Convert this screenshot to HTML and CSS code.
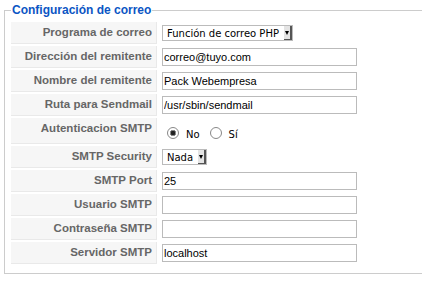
FILE: index.html
```html
<!DOCTYPE html>
<html lang="es">
<head>
    <meta charset="UTF-8">
    <title>Configuración de correo</title>
    <link rel="stylesheet" href="styles.css">
</head>
<body>
    <fieldset class="adminform">
        <legend>Configuración de correo</legend>
        <div class="admintable">
            <div class="row">
                <label class="key">Programa de correo</label>
                <div class="field">
                    <span class="select select-wide">
                        <span class="select-text">Función de correo PHP</span>
                        <span class="select-arrow"></span>
                    </span>
                </div>
            </div>
            <div class="row">
                <label class="key">Dirección del remitente</label>
                <div class="field"><input class="inputbox" type="text" value="correo@tuyo.com"></div>
            </div>
            <div class="row">
                <label class="key">Nombre del remitente</label>
                <div class="field"><input class="inputbox" type="text" value="Pack Webempresa"></div>
            </div>
            <div class="row">
                <label class="key">Ruta para Sendmail</label>
                <div class="field"><input class="inputbox" type="text" value="/usr/sbin/sendmail"></div>
            </div>
            <div class="row row-tall">
                <label class="key">Autenticacion SMTP</label>
                <div class="field radios">
                    <label class="radio"><input type="radio" name="smtpauth" checked> <span>No</span></label>
                    <label class="radio"><input type="radio" name="smtpauth"> <span>Sí</span></label>
                </div>
            </div>
            <div class="row">
                <label class="key">SMTP Security</label>
                <div class="field">
                    <span class="select select-small">
                        <span class="select-text">Nada</span>
                        <span class="select-arrow"></span>
                    </span>
                </div>
            </div>
            <div class="row">
                <label class="key">SMTP Port</label>
                <div class="field"><input class="inputbox" type="text" value="25"></div>
            </div>
            <div class="row">
                <label class="key">Usuario SMTP</label>
                <div class="field"><input class="inputbox" type="text" value=""></div>
            </div>
            <div class="row">
                <label class="key">Contraseña SMTP</label>
                <div class="field"><input class="inputbox" type="password" value=""></div>
            </div>
            <div class="row">
                <label class="key">Servidor SMTP</label>
                <div class="field"><input class="inputbox" type="text" value="localhost"></div>
            </div>
        </div>
    </fieldset>
</body>
</html>
```
FILE: styles.css
```css
body {
    margin: 0;
    background-color: #fff;
    font-family: "Liberation Sans", Arial, sans-serif;
    font-size: 11px;
    color: #333;
}
fieldset.adminform {
    width: 440px;
    margin: 3px 0 0 4px;
    padding: 5px 0 9px 6px;
    border: 1px solid #ccc;
}
fieldset.adminform legend {
    margin-left: 0;
    padding: 0 1px;
    color: #0b55c4;
    font-size: 12px;
    font-weight: bold;
    line-height: 14px;
}
.admintable {
    display: flex;
    flex-direction: column;
    gap: 2px;
}
.row {
    display: grid;
    grid-template-columns: 146px 1fr;
    column-gap: 5px;
    height: 22px;
}
.row-tall {
    height: 26px;
}
.key {
    box-sizing: border-box;
    padding: 3px 4px 0 0;
    background-color: #f6f6f6;
    border-bottom: 1px solid #e9e9e9;
    border-right: 1px solid #e9e9e9;
    text-align: right;
    color: #666;
    font-size: 11.5px;
    font-weight: bold;
    line-height: 14px;
}
.field {
    display: flex;
    align-items: center;
}
.inputbox {
    box-sizing: border-box;
    width: 195px;
    height: 18px;
    margin: 0;
    padding: 0 1px;
    border: 1px solid #bbb;
    font-family: "Liberation Sans", Arial, sans-serif;
    font-size: 11px;
    color: #000;
}
.select {
    box-sizing: border-box;
    display: inline-flex;
    align-items: center;
    height: 16px;
    border: 1px solid #bbb;
    background-color: #fff;
}
.select-wide {
    width: 131px;
}
.select-small {
    width: 45px;
}
.select-text {
    flex: 1;
    padding-left: 4px;
    font-family: "DejaVu Sans", Verdana, sans-serif;
    font-size: 10px;
    color: #000;
}
.select-arrow {
    position: relative;
    box-sizing: border-box;
    width: 8px;
    height: 14px;
    background-color: #e4e4e4;
    border-right: 2px solid #555;
    border-bottom: 1px solid #555;
}
.select-arrow::after {
    content: "";
    position: absolute;
    left: 1px;
    top: 5px;
    border-left: 2.5px solid transparent;
    border-right: 2.5px solid transparent;
    border-top: 4px solid #000;
}
.radios {
    align-items: flex-start;
    gap: 10px;
    padding: 9px 0 0 5px;
}
.radio {
    display: inline-flex;
    align-items: flex-start;
    gap: 7px;
    font-family: "DejaVu Sans", Verdana, sans-serif;
    font-size: 10px;
    line-height: 12px;
    color: #000;
}
.radio span {
    padding-top: 2px;
}
.radio input {
    appearance: none;
    box-sizing: border-box;
    width: 12px;
    height: 12px;
    margin: 0;
    border: 1px solid #888;
    border-radius: 50%;
    background-color: #fff;
}
.radio input:checked {
    background: radial-gradient(circle, #222 0 2px, #888 2.5px 3px, #fff 3.5px);
}
```
